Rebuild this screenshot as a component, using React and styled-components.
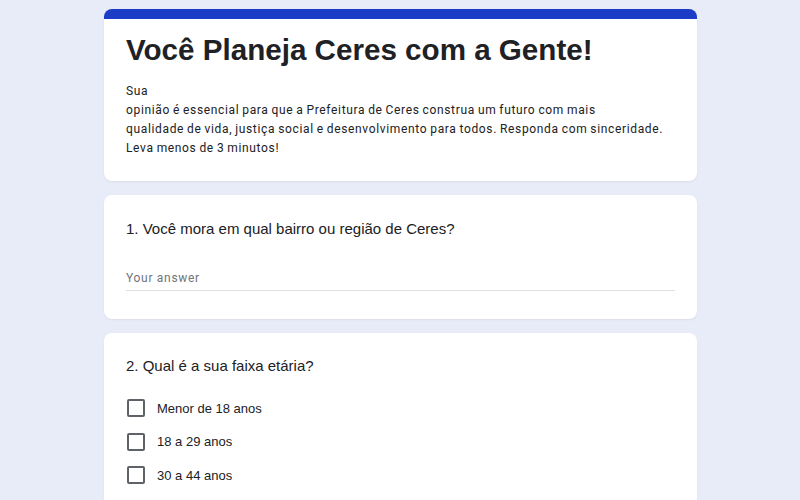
import styled, { createGlobalStyle } from 'styled-components'

const GlobalStyle = createGlobalStyle`
    body {
        margin: 0;
        background: #e8ebf8;
        font-family: "Liberation Sans", Arial, sans-serif;
        color: #202124;
    }
`

const Page = styled.div`
    width: 593px;
    margin-left: 104px;
    padding-top: 9px;
    display: flex;
    flex-direction: column;
    gap: 14px;
`

const Card = styled.div`
    background: #ffffff;
    border-radius: 8px;
    border-top: ${props => props.accent ? '10px solid #1a3cc6' : 'none'};
    padding: ${props => props.pad || '22px 22px 24px'};
    box-shadow: 0 1px 2px rgba(60, 64, 67, 0.08);
`

const Title = styled.h1`
    margin: 0;
    font-size: 29.6px;
    line-height: 36px;
    font-weight: 700;
    color: #202124;
`

const Description = styled.p`
    margin: 14px 0 0;
    font-family: Roboto, "Liberation Sans", sans-serif;
    font-size: 12px;
    line-height: 19px;
    letter-spacing: 0.65px;
    word-spacing: -0.6px;
    color: #202124;
`

const Question = styled.div`
    font-size: 15px;
    line-height: 22px;
    color: #202124;
`

const AnswerField = styled.div`
    margin-top: 29px;
    padding-bottom: 3px;
    border-bottom: 1px solid #e0e0e0;
    font-family: Roboto, "Liberation Sans", sans-serif;
    font-size: 12px;
    line-height: 18px;
    color: #70757a;
    letter-spacing: 0.7px;
`

const Options = styled.div`
    margin-top: 22px;
    display: flex;
    flex-direction: column;
    gap: 15.5px;
`

const Option = styled.label`
    display: flex;
    align-items: center;
    gap: 12px;
    font-size: 13px;
    color: #202124;
`

const Box = styled.span`
    width: 14px;
    height: 14px;
    border: 2px solid #5f6368;
    border-radius: 2px;
    flex-shrink: 0;
    margin-left: 1px;
`

const ages = ['Menor de 18 anos', '18 a 29 anos', '30 a 44 anos', '45 a 59 anos', '60 anos ou mais']

const App = () => {
    return (
        <>
            <GlobalStyle />
            <Page>
                <Card accent pad="13px 22px 23px">
                    <Title>Você Planeja Ceres com a Gente!</Title>
                    <Description>
                        Sua<br />
                        opinião é essencial para que a Prefeitura de Ceres construa um futuro com mais<br />
                        qualidade de vida, justiça social e desenvolvimento para todos. Responda com sinceridade.<br />
                        Leva menos de 3 minutos!
                    </Description>
                </Card>
                <Card pad="23px 22px 28px">
                    <Question>1. Você mora em qual bairro ou região de Ceres?</Question>
                    <AnswerField>Your answer</AnswerField>
                </Card>
                <Card pad="22px 22px 24px">
                    <Question>2. Qual é a sua faixa etária?</Question>
                    <Options>
                        {ages.map(a => (
                            <Option key={a}>
                                <Box />
                                {a}
                            </Option>
                        ))}
                    </Options>
                </Card>
            </Page>
        </>
    )
}

export default App
